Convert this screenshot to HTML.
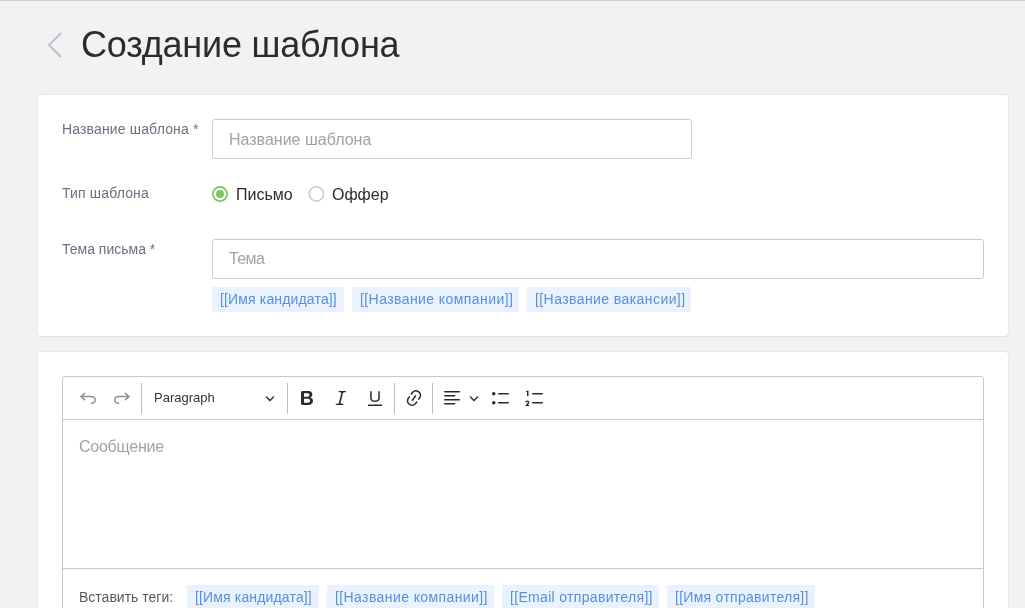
<!DOCTYPE html>
<html><head><meta charset="utf-8">
<style>
*{box-sizing:border-box;margin:0;padding:0}
html,body{width:1025px;height:608px;overflow:hidden}
body{will-change:transform;background:#f2f2f2;font-family:"Liberation Sans",sans-serif;position:relative;color:#2b2b2b}
.topline{position:absolute;left:0;top:0;width:1025px;height:1px;background:#cfd0d2}
.abs{position:absolute;white-space:nowrap}
.title{left:81px;top:24px;font-size:36px;line-height:42px;color:#2b2b2b;letter-spacing:-.2px}
.card{position:absolute;left:38px;width:970px;background:#fff;border-radius:3px;box-shadow:0 1px 1px rgba(0,0,0,.04),0 0 0 1px rgba(0,0,0,.035)}
.label{font-size:14px;line-height:16px;color:#6b7180;letter-spacing:.15px}
.input{position:absolute;border:1px solid #c3cad9;border-radius:3px;background:#fff}
.ph{font-size:16px;line-height:18px;color:#9ea3ab}
.rtext{font-size:16px;line-height:18px;color:#2b2b2b}
.chip{position:absolute;height:25px;background:#eaf2fd;color:#5592dc;font-size:14px;line-height:25px;padding-left:8px;white-space:nowrap}
.sep{position:absolute;width:1px;height:31px;top:383px;background:#bdbfc2}
</style></head><body>
<div class="topline"></div>
<div class="abs title">Создание шаблона</div>

<div class="card" style="top:95px;height:241px"></div>
<div class="card" style="top:352px;height:300px"></div>

<!-- card 1 -->
<div class="abs label" style="left:62px;top:121px">Название шаблона *</div>
<div class="input" style="left:212px;top:119px;width:480px;height:40px"></div>
<div class="abs ph" style="left:229px;top:131px">Название шаблона</div>

<div class="abs label" style="left:62px;top:185px">Тип шаблона</div>
<svg class="abs" style="left:200px;top:180px" width="140" height="30" viewBox="200 180 140 30"><circle cx="220" cy="194" r="7.1" fill="none" stroke="#7cc85e" stroke-width="1.8"/><circle cx="220" cy="194" r="4" fill="#7cc85e"/><circle cx="316.4" cy="193.9" r="7.2" fill="none" stroke="#c3cbd8" stroke-width="1.6"/></svg>
<div class="abs rtext" style="left:236px;top:186px">Письмо</div>

<div class="abs rtext" style="left:332px;top:186px">Оффер</div>

<div class="abs label" style="left:62px;top:241px;letter-spacing:0">Тема письма *</div>
<div class="input" style="left:212px;top:239px;width:772px;height:40px"></div>
<div class="abs ph" style="left:229px;top:250px;letter-spacing:-.6px">Тема</div>


<!-- chips -->
<div class="chip" style="left:212px;top:287px;width:132px"><span id="c0" style="letter-spacing:0.15px">[[Имя кандидата]]</span></div>
<div class="chip" style="left:352px;top:287px;width:167px"><span id="c1" style="letter-spacing:0.42px">[[Название компании]]</span></div>
<div class="chip" style="left:527px;top:287px;width:164px"><span id="c2" style="letter-spacing:0.42px">[[Название вакансии]]</span></div>
<div class="chip" style="left:187px;top:585px;width:132px"><span id="c3" style="letter-spacing:0.15px">[[Имя кандидата]]</span></div>
<div class="chip" style="left:327px;top:585px;width:167px"><span id="c4" style="letter-spacing:0.4px">[[Название компании]]</span></div>
<div class="chip" style="left:502px;top:585px;width:157px"><span id="c5" style="letter-spacing:0.32px">[[Email отправителя]]</span></div>
<div class="chip" style="left:667px;top:585px;width:148px"><span id="c6" style="letter-spacing:0.28px">[[Имя отправителя]]</span></div>

<!-- editor -->
<div style="position:absolute;left:62px;top:376px;width:922px;height:260px;border:1px solid #c3cad9;border-radius:3px 3px 0 0"></div>
<div style="position:absolute;left:62px;top:419px;width:922px;height:1px;background:#c3cad9"></div>
<div style="position:absolute;left:62px;top:568px;width:922px;height:1px;background:#c3cad9"></div>
<div class="sep" style="left:141px"></div>
<div class="sep" style="left:287px"></div>
<div class="sep" style="left:394px"></div>
<div class="sep" style="left:432px"></div>
<div class="abs" style="left:154px;top:390px;font-size:13px;line-height:15px;color:#333">Paragraph</div>
<div class="abs ph" style="left:79px;top:438px;letter-spacing:-.25px">Сообщение</div>

<div class="abs label" style="left:79px;top:589px;color:#555a62;letter-spacing:0">Вставить теги:</div>


<!-- toolbar icons -->
<svg class="abs" style="left:78px;top:388px" width="20" height="20" viewBox="0 0 20 20"><path fill="#8a9099" d="m5.042 9.367 2.189 1.837a.75.75 0 0 1-.965 1.149l-3.788-3.18a.747.747 0 0 1-.21-.284.75.75 0 0 1 .17-.945L6.23 4.762a.75.75 0 1 1 .964 1.15L4.863 7.866h8.917A.75.75 0 0 1 14 7.9a4 4 0 1 1-1.477 7.718l.344-1.489a2.5 2.5 0 1 0 1.094-4.73l.008-.032H5.042z"/></svg>
<svg class="abs" style="left:112px;top:388px" width="20" height="20" viewBox="0 0 20 20"><path fill="#8a9099" d="m14.958 9.367-2.189 1.837a.75.75 0 0 0 .965 1.149l3.788-3.18a.747.747 0 0 0 .21-.284.75.75 0 0 0-.17-.945L13.77 4.762a.75.75 0 1 0-.964 1.15l2.331 1.955H6.22A.75.75 0 0 0 6 7.9a4 4 0 1 0 1.477 7.718l-.344-1.489A2.5 2.5 0 1 1 6.039 9.4l-.008-.032h8.927z"/></svg>
<svg class="abs" style="left:265px;top:393px" width="10" height="10" viewBox="0 0 10 10"><path fill="#333" d="M.941 4.523a.75.75 0 1 1 1.06-1.06l3.006 3.005 3.005-3.005a.75.75 0 1 1 1.06 1.06l-3.549 3.55a.75.75 0 0 1-1.168-.136L.941 4.523z"/></svg>
<svg class="abs" style="left:297px;top:388px" width="20" height="20" viewBox="0 0 20 20"><path fill="#2b2b2b" d="M10.187 17H5.773c-.637 0-1.092-.138-1.364-.415-.273-.277-.409-.718-.409-1.323V4.738c0-.617.14-1.062.419-1.332.279-.27.73-.406 1.354-.406h4.68c.69 0 1.288.041 1.793.124.506.083.96.242 1.36.478.341.197.644.447.906.75a3.262 3.262 0 0 1 .808 2.162c0 1.401-.722 2.426-2.167 3.075C15.050 10.175 16 11.315 16 13.010a3.756 3.756 0 0 1-2.296 3.504 6.1 6.1 0 0 1-1.517.377c-.571.073-1.238.11-2 .11zm-.217-6.217H7v4.087h3.069c1.977 0 2.965-.69 2.965-2.072 0-.707-.256-1.22-.768-1.537-.512-.319-1.277-.478-2.296-.478zM7 5.13v3.619h2.606c.729 0 1.292-.067 1.690-.2a1.6 1.6 0 0 0 .91-.765c.165-.267.247-.566.247-.897 0-.707-.26-1.176-.778-1.409-.519-.232-1.31-.348-2.375-.348H7z"/></svg>
<svg class="abs" style="left:331px;top:388px" width="20" height="20" viewBox="0 0 20 20"><path fill="#2b2b2b" d="m9.586 14.633.021.004c-.036.335.095.655.393.962.082.083.173.15.274.201h1.474a.6.6 0 1 1 0 1.2H5.304a.6.6 0 0 1 0-1.2h1.15c.474-.07.809-.182 1.005-.334.157-.122.291-.32.404-.597l2.416-9.55a1.053 1.053 0 0 0-.281-.823 1.12 1.12 0 0 0-.442-.296H8.150a.6.6 0 0 1 0-1.2h6.443a.6.6 0 1 1 0 1.2h-1.195c-.376.056-.65.155-.823.296-.215.175-.423.439-.623.79l-2.366 9.347z"/></svg>
<svg class="abs" style="left:365px;top:388px" width="20" height="20" viewBox="0 0 20 20"><path fill="#2b2b2b" d="M3 18v-1.5h14V18zm2.2-8V3.6c0-.4.4-.6.8-.6.3 0 .7.2.7.6v6.2c0 2 1.3 2.8 3.2 2.8 1.9 0 3.4-.9 3.4-2.9V3.6c0-.3.4-.5.8-.5.3 0 .7.2.7.5V10c0 2.7-2.2 4-4.9 4-2.6 0-4.7-1.2-4.7-4z"/></svg>
<svg class="abs" style="left:404px;top:388px" width="20" height="20" viewBox="0 0 20 20"><path fill="#2b2b2b" d="m11.077 15 .991-1.416a.75.75 0 1 1 1.229.86l-1.148 1.64a.748.748 0 0 1-.217.206 5.251 5.251 0 0 1-8.503-5.955.741.741 0 0 1 .12-.274l1.147-1.639a.75.75 0 1 1 1.228.86L4.933 10.700l.006.003a3.75 3.75 0 0 0 6.132 4.294l.006.004zm5.494-5.335a.748.748 0 0 1-.12.274l-1.147 1.639a.75.75 0 1 1-1.228-.86l.86-1.23a3.75 3.75 0 0 0-6.144-4.301l-.86 1.229a.75.75 0 0 1-1.229-.86l1.148-1.64a.748.748 0 0 1 .217-.206 5.251 5.251 0 0 1 8.503 5.955zm-4.563-2.532a.75.75 0 0 1 .184 1.045l-3.155 4.505a.75.75 0 1 1-1.229-.86l3.155-4.506a.75.75 0 0 1 1.045-.184z"/></svg>
<svg class="abs" style="left:442px;top:388px" width="20" height="20" viewBox="0 0 20 20"><path fill="#2b2b2b" d="M2 3.75c0 .414.336.75.75.75h14.5a.75.75 0 1 0 0-1.5H2.75a.75.75 0 0 0-.75.75zm0 8c0 .414.336.75.75.75h14.5a.75.75 0 1 0 0-1.5H2.75a.75.75 0 0 0-.75.75zm0 4c0 .414.336.75.75.75h9.929a.75.75 0 1 0 0-1.5H2.75a.75.75 0 0 0-.75.75zm0-8c0 .414.336.75.75.75h9.929a.75.75 0 1 0 0-1.5H2.75a.75.75 0 0 0-.75.75z"/></svg>
<svg class="abs" style="left:469px;top:393px" width="10" height="10" viewBox="0 0 10 10"><path fill="#333" d="M.941 4.523a.75.75 0 1 1 1.06-1.06l3.006 3.005 3.005-3.005a.75.75 0 1 1 1.06 1.06l-3.549 3.55a.75.75 0 0 1-1.168-.136L.941 4.523z"/></svg>
<svg class="abs" style="left:491px;top:388px" width="20" height="20" viewBox="0 0 20 20"><path fill="#2b2b2b" d="M7 5.75c0 .414.336.75.75.75h9.5a.75.75 0 1 0 0-1.5h-9.5a.75.75 0 0 0-.75.75zm-6 0C1 4.784 1.777 4 2.75 4c.966 0 1.75.777 1.75 1.75 0 .966-.777 1.75-1.75 1.75C1.784 7.5 1 6.723 1 5.75zm6 9c0 .414.336.75.75.75h9.5a.75.75 0 1 0 0-1.5h-9.5a.75.75 0 0 0-.75.75zm-6 0c0-.966.777-1.75 1.75-1.75.966 0 1.75.777 1.75 1.75 0 .966-.777 1.750-1.75 1.750-.966 0-1.75-.777-1.75-1.75z"/></svg>
<svg class="abs" style="left:525px;top:388px" width="20" height="20" viewBox="0 0 20 20"><path fill="#2b2b2b" d="M7 5.75c0 .414.336.75.75.75h9.5a.75.75 0 1 0 0-1.5h-9.5a.75.75 0 0 0-.75.75zM3.5 3v5H2V3.7H1v-1h2.5V3zM.343 17.857l2.59-3.257H2.92a.6.6 0 1 0-1.04 0H.302a2 2 0 1 1 3.995 0h-.001c-.048.405-.16.734-.333.988-.175.254-.59.692-1.244 1.312H4.3v1h-4l.043-.043zM7 14.75a.75.75 0 0 1 .75-.75h9.5a.75.75 0 1 1 0 1.5h-9.5a.75.75 0 0 1-.75-.75z"/></svg>

<!-- icons -->
<svg class="abs" style="left:0;top:0" width="1025" height="608" viewBox="0 0 1025 608">
  <path d="M61 33 L49 45 L61 57" fill="none" stroke="#b7c1d1" stroke-width="1.9"/>
</svg>
</body></html>
